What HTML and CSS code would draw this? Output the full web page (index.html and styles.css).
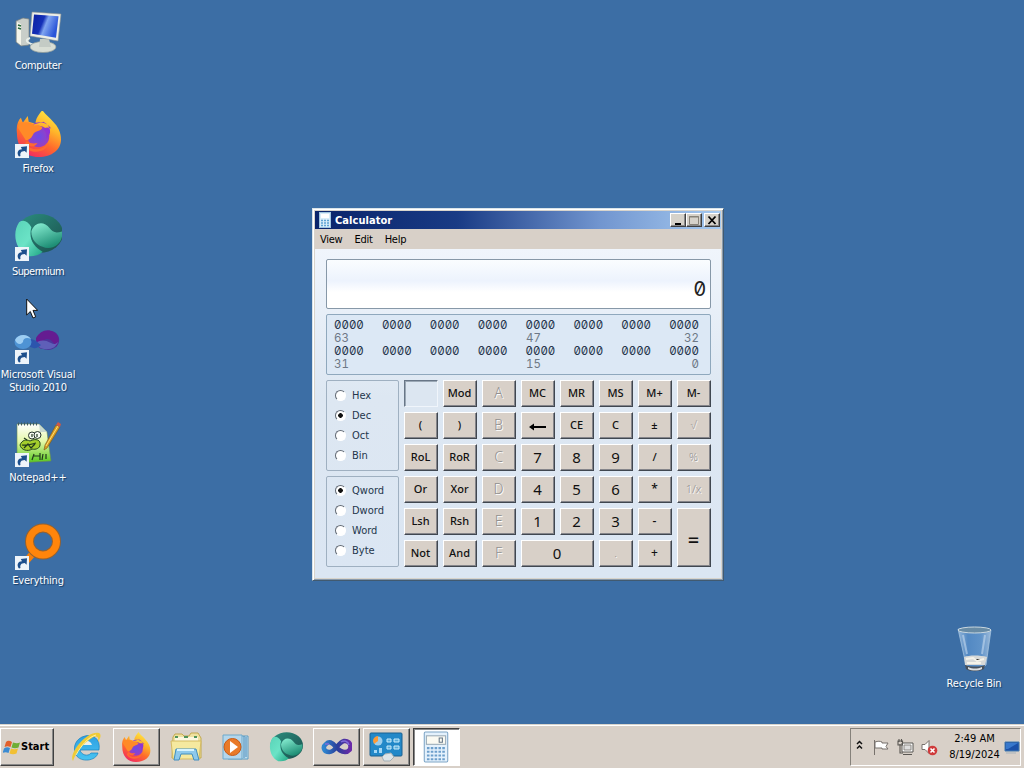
FILE: index.html
```html
<!DOCTYPE html>
<html lang="en">
<head>
<meta charset="utf-8">
<title>Desktop</title>
<link rel="stylesheet" href="styles.css">
</head>
<body>
<svg class="defs" width="0" height="0" aria-hidden="true">
  <defs>
    <linearGradient id="screen" x1="0" y1="0" x2="1" y2=".35"><stop offset="0" stop-color="#0a1fa0"/><stop offset=".45" stop-color="#1430b8"/><stop offset=".6" stop-color="#7fa4f0"/><stop offset="1" stop-color="#2a55d8"/></linearGradient>
    <linearGradient id="fox" x1=".8" y1="0" x2=".3" y2="1"><stop offset="0" stop-color="#fff04a"/><stop offset=".35" stop-color="#ffb52a"/><stop offset=".65" stop-color="#ff6a2c"/><stop offset="1" stop-color="#f02a62"/></linearGradient>
    <radialGradient id="foxcore"><stop offset="0" stop-color="#6a4be8"/><stop offset="1" stop-color="#9a3fc0"/></radialGradient>
    <linearGradient id="sm" x1="0" y1="0" x2="1" y2="1"><stop offset="0" stop-color="#2b8f80"/><stop offset="1" stop-color="#1b4f4c"/></linearGradient>
    <linearGradient id="sm2" x1="0" y1="0" x2="1" y2="1"><stop offset="0" stop-color="#59d3b8"/><stop offset=".5" stop-color="#6be3c6"/><stop offset="1" stop-color="#1fa583"/></linearGradient>
    <linearGradient id="sm3" x1="0" y1="0" x2=".5" y2="1"><stop offset="0" stop-color="#8df3d7"/><stop offset="1" stop-color="#1f8f76"/></linearGradient>
    <linearGradient id="vs" x1="0" x2="1"><stop offset="0" stop-color="#2f86d0"/><stop offset=".5" stop-color="#2a3f9a"/><stop offset="1" stop-color="#6a2aa8"/></linearGradient>
    <linearGradient id="npp" x1="0" y1="0" x2="0" y2="1"><stop offset="0" stop-color="#fff"/><stop offset=".45" stop-color="#e4f8a8"/><stop offset="1" stop-color="#55c81c"/></linearGradient>
    <linearGradient id="glass" x1="0" x2="1"><stop offset="0" stop-color="#b7d3ee"/><stop offset=".3" stop-color="#5c94d0"/><stop offset=".7" stop-color="#6ea2d8"/><stop offset="1" stop-color="#c4daf0"/></linearGradient>
    <linearGradient id="ie" x1="0" y1="0" x2="0" y2="1"><stop offset="0" stop-color="#2d9fe2"/><stop offset="1" stop-color="#48c4f2"/></linearGradient>
    <symbol id="firefox" viewBox="0 0 48 48">
      <path d="M2 24C1 16 3 11 6 8l2 5 5-7 1 6 7 2C21 8 25 4 28 0c2 4 7 7 11 12 5 5 8 11 8 18 0 10-9 18-23 18C11 48 2 39 2 24z" fill="url(#fox)"/>
      <circle cx="24" cy="27" r="11" fill="url(#foxcore)"/>
      <path d="M18 15c6-5 15-2 19 4-4-2-7-1-8 1 3 2 4 6 3 9 6-4 5-13-3-17z" fill="#8f34d4"/>
      <path d="M3 18c1-4 4-7 6-5 4-1 8 0 11 3 3-1 6 0 8 2-2 4-7 3-9 6-2 4-3 6-8 7z" fill="#ff8a28"/>
      <path d="M12 32c4 3 8 2 11 2-3 4-7 4-11 1 4 7 16 7 22-1-1 9-18 13-25 2z" fill="#ff6a32"/>
    </symbol>
    <symbol id="supermium" viewBox="0 0 48 44">
      <ellipse cx="25" cy="20" rx="23" ry="19" fill="url(#sm)"/>
      <path d="M5 9C-2 19 1 36 13 42c7 1 12-1 15-4C19 33 14 25 17 14 14 8 9 6 5 9z" fill="url(#sm2)"/>
      <path d="M17 18c3-9 12-11 18-3 3 4 6 5 12 3 2 13-11 19-19 15-6-2-11-7-11-15z" fill="url(#sm3)"/>
    </symbol>
    <symbol id="shortcut" viewBox="0 0 14 14">
      <rect width="14" height="14" fill="#eef4fa"/>
      <path d="M4 12.500C1 8.500 3.500 5 7 5.200L5.800 3 12 2.300l-.4 6.400-1.900-1.800C6 7 4.800 9 5.500 12z" fill="#1d4f8c"/>
    </symbol>
    <symbol id="calc" viewBox="0 0 24 30">
      <rect x="1" y="1" width="22" height="28" rx="1" fill="#e4f1fc" stroke="#7fa6c6"/>
      <rect x="3" y="4.500" width="18" height="8" fill="#fbfaf2" stroke="#9bacb8"/>
      <path d="M15 6.500h3v4h-3z" fill="none" stroke="#667788"/>
      <path d="M3.500 16h17M3.500 19.500h17M3.500 23h17M3.500 26.500h17" stroke="#6d9fcb" stroke-width="2" stroke-dasharray="2.400 1.200"/>
    </symbol>
    <symbol id="calc-small" viewBox="0 0 12 16">
      <rect x=".5" y=".5" width="11" height="15" fill="#d9edf9" stroke="#9fc4df"/>
      <path d="M2 2h8v4H2z" fill="#fff"/>
      <path d="M2 8.500h8M2 11h8M2 13.500h8" stroke="#5ea3d3" stroke-width="1.300" stroke-dasharray="2 1"/>
    </symbol>
  </defs>
</svg>

<main class="desktop">
  <div class="shortcut computer">
    <svg class="icon" viewBox="0 0 48 48">
      <path d="M2 13l7-3 6 1v26l-8 1-5-4z" fill="#c9cec9" stroke="#777f80" stroke-width=".7"/><path d="M3 14l4 2v21l-4-3z" fill="#f4f4ea"/><path d="M4 17l3 1M4 20l3 1" stroke="#27683b" stroke-width="1.500"/><path d="M16 30c-6 2-3 5 4 7" stroke="#e9efea" stroke-width="2" fill="none"/>
      <ellipse cx="29" cy="39" rx="13" ry="5.500" fill="#d9ded5" stroke="#8e9a96" stroke-width=".7"/><path d="M26 31h9l2 8H25z" fill="#c4cbc5"/>
      <path d="M18 4l29 2-3 27-28-5z" fill="#eceee7" stroke="#8b9292" stroke-width=".6"/><path d="M20 6.500l24.500 1.800-2.500 21.500-24-4z" fill="url(#screen)"/>
    </svg>
    <span class="name">Computer</span>
  </div>
  <div class="shortcut firefox">
    <svg class="icon" viewBox="0 0 48 48"><use href="#firefox" x="1" y="-1" width="47" height="47"/><use href="#shortcut" x="1" y="33" width="14" height="14"/></svg>
    <span class="name">Firefox</span>
  </div>
  <div class="shortcut supermium">
    <svg class="icon" viewBox="0 0 48 48"><use href="#supermium" y="-1" width="49" height="45"/><use href="#shortcut" x="1" y="33" width="14" height="14"/></svg>
    <span class="name">Supermium</span>
  </div>
  <div class="shortcut studio">
    <svg class="icon" viewBox="0 0 48 48">
      <g transform="translate(0 1)">
      <path d="M22 27c6 5 14 7 20 2 6-6 3-15-5-16-7 0-11 4-15 10" fill="#4b369b"/><path d="M22 20c4-7 11-10 18-6 6 4 6 10 2 15-3-6-7-10-12-7-4 2-5 6-2 9-5-2-6-6-6-11z" fill="#651c91"/><path d="M20 26c5-4 10-5 17-1 3 2 5 1 7-1-2 7-13 11-24 2z" fill="#5f5fb8"/>
      <path d="M17 21c5 1 6 3 10 6-4 4-8 4-12 1" fill="#2c55ad"/><ellipse cx="9" cy="24" rx="8.500" ry="7" fill="#4e93d4"/><path d="M1 22c3-6 12-7 16-1-4-2-8-1-8 3-2 3-6 3-8-2z" fill="#9dcdf2"/>
      </g>
      <use href="#shortcut" x="1" y="33" width="14" height="14"/>
    </svg>
    <span class="name">Microsoft Visual<br>Studio 2010</span>
  </div>
  <div class="shortcut notepad">
    <svg class="icon" viewBox="0 0 48 48">
      <path d="M3 4h22l8 8 4 29-34 2z" fill="url(#npp)" stroke="#6a8b50" stroke-width=".6"/><path d="M25 4l8 8h-7z" fill="#c8d9d0"/><path d="M4 4h21" stroke="#405b61" stroke-width="3" stroke-dasharray="1 2"/>
      <path d="M6 25c2-5 6-6 10-4 6-3 11-1 10 4 0 3-4 5-8 4-4 3-11 1-12-4z" fill="#a5ce2c" stroke="#24451d"/><circle cx="18" cy="15.500" r="3.500" fill="#f6faf0" stroke="#26342b"/><circle cx="23.500" cy="15" r="3.500" fill="#f6faf0" stroke="#26342b"/><path d="M18 14v3M23 14v3M8 25c6 1 10-1 14-2M10 28l4-4 3 4 4-4M13 20l-3-2M20 34l-2 6M20 36h6M26 33v7M29 34l-1 6M32 34v5" fill="none" stroke="#21381d" stroke-width="1.200"/>
      <path d="M42 5l4 2-13 21-3 2 1-5z" fill="#d99c24" stroke="#75571a" stroke-width=".6"/><path d="M44 6L32 26" stroke="#ffe070" stroke-width="1"/><path d="M42 5l2-3 3 2-1 3z" fill="#ce5946"/>
      <use href="#shortcut" x="1" y="33" width="14" height="14"/>
    </svg>
    <span class="name">Notepad++</span>
  </div>
  <div class="shortcut everything">
    <svg class="icon" viewBox="0 0 48 48"><path d="M17 27l5 5-7 8-5-4z" fill="#f57f0b"/><circle cx="29" cy="18.500" r="13.500" fill="none" stroke="#96622f" stroke-width="9"/><circle cx="29" cy="18.500" r="13.500" fill="none" stroke="#ff850b" stroke-width="7"/><use href="#shortcut" x="1" y="33" width="14" height="14"/></svg>
    <span class="name">Everything</span>
  </div>
  <div class="shortcut recycle">
    <svg class="icon" viewBox="0 0 48 48"><path d="M8 3l33 1-5 35c-4 4-15 4-20 0z" fill="url(#glass)" fill-opacity=".7" stroke="#a9c7e3" stroke-width=".7"/><ellipse cx="24.500" cy="4" rx="16.500" ry="3" fill="#688ba5" stroke="#cbd8df"/><path d="M14 31c5-2 16-2 23 0l-2 8H15z" fill="#d7d9d8"/><path d="M15 39c6 2 15 2 20 0l-1 4c-5 3-14 3-18 0z" fill="#46505c"/><path d="M18 41c5 2 9 2 14 0v2c-4 2-10 2-14 0z" fill="#d8dce0"/><path d="M16 33l7-1 4 3 7-2M17 37h14" stroke="#f5f3ea" stroke-width="2"/><path d="M13 9l4 19M35 9l-3 19" stroke="#d5e5f5" stroke-width="2" opacity=".5"/></svg>
    <span class="name">Recycle Bin</span>
  </div>

  <section class="window">
    <header class="titlebar">
      <svg class="title-icon"><use href="#calc-small"/></svg>
      <h1>Calculator</h1>
      <div class="controls">
        <button aria-label="Minimize"><svg viewBox="0 0 12 11"><path d="M3 8h6v2H3z"/></svg></button><button aria-label="Maximize"><svg viewBox="0 0 12 11"><path d="M1.500 1.500h9v8h-9z" fill="none" stroke="#888379"/><path d="M1 2h10" stroke="#888379"/></svg></button><button class="close" aria-label="Close"><svg viewBox="0 0 12 11"><path d="M2.500 1.500l7 7.500M9.500 1.500l-7 7.500" stroke="#000" stroke-width="1.800"/></svg></button>
      </div>
    </header>
    <nav class="menu"><span>View</span><span>Edit</span><span>Help</span></nav>
    <div class="client">
      <output class="display">0</output>
      <div class="bits">
        <div class="bit-row"><span>0000</span><span>0000</span><span>0000</span><span>0000</span><span>0000</span><span>0000</span><span>0000</span><span>0000</span></div>
        <div class="bit-index"><span>63</span><span class="middle">47</span><span class="last">32</span></div>
        <div class="bit-row"><span>0000</span><span>0000</span><span>0000</span><span>0000</span><span>0000</span><span>0000</span><span>0000</span><span>0000</span></div>
        <div class="bit-index"><span>31</span><span class="middle">15</span><span class="last">0</span></div>
      </div>
      <div class="controls-area">
        <div class="modes">
          <div class="group"><label><i class="radio"></i>Hex</label><label><i class="radio on"></i>Dec</label><label><i class="radio"></i>Oct</label><label><i class="radio"></i>Bin</label></div>
          <div class="group sizes"><label><i class="radio on"></i>Qword</label><label><i class="radio"></i>Dword</label><label><i class="radio"></i>Word</label><label><i class="radio"></i>Byte</label></div>
        </div>
        <div class="keys">
          <span class="blank"></span><button>Mod</button><button class="off letter">A</button><button>MC</button><button>MR</button><button>MS</button><button>M+</button><button>M-</button>
          <button>(</button><button>)</button><button class="off letter">B</button><button aria-label="Backspace"><svg class="back" viewBox="0 0 18 8"><path d="M0 4l5-3.500V3h12v2H5v2.500z"/></svg></button><button>CE</button><button>C</button><button>±</button><button class="off">√</button>
          <button>RoL</button><button>RoR</button><button class="off letter">C</button><button class="num">7</button><button class="num">8</button><button class="num">9</button><button>/</button><button class="off">%</button>
          <button>Or</button><button>Xor</button><button class="off letter">D</button><button class="num">4</button><button class="num">5</button><button class="num">6</button><button class="op">*</button><button class="off">1/x</button>
          <button>Lsh</button><button>Rsh</button><button class="off letter">E</button><button class="num">1</button><button class="num">2</button><button class="num">3</button><button class="op">-</button><button class="equals">=</button>
          <button>Not</button><button>And</button><button class="off letter">F</button><button class="num zero">0</button><button class="off">.</button><button class="op">+</button>
        </div>
      </div>
    </div>
  </section>
  <svg class="pointer" viewBox="0 0 12 21"><path d="M.7 1v16l3.600-3.500 2.700 6.500 2.700-1.200L7 12.400h4.700z" fill="#fff" stroke="#111"/></svg>
</main>

<footer class="taskbar">
  <button class="start"><svg viewBox="0 0 18 16"><path d="M3 3c2-2 4-1 6 0L7.500 8C5 7 4 7 1.500 8z" fill="#e2602c"/><path d="M10 3.500c3 1 5 1 7 0l-1.500 5c-2 1-5 1-7 0z" fill="#6fae35"/><path d="M1 9.500C3 8 5 8 7 9l-1.500 5c-2-1-4-1-6 0z" fill="#3b8bd2"/><path d="M8 9.500c2 1 5 1 7 0l-1.500 5c-2 1-5 1-7 0z" fill="#f2c033"/></svg>Start</button>
  <div class="task"><svg viewBox="0 0 32 32"><path d="M10 19h19C31 7 22 3 15 5 6 7 2 16 6 24c5 8 20 6 22-2h-7c-3 4-10 2-11-3z" fill="url(#ie)" stroke="#1680bd" stroke-width=".7"/><path d="M11 14c1-5 9-6 11 0z" fill="#e8eeec"/><path d="M3 30C-2 23 17-1 29 2c3 2 1 6-1 9 1-5-1-7-6-4C13 12 5 23 3 30z" fill="#f0cb36"/><path d="M6 24C11 15 18 6 26 4" stroke="#fff3a0" fill="none"/></svg></div>
  <div class="task raised"><svg class="fox-icon"><use href="#firefox"/></svg></div>
  <div class="task"><svg viewBox="0 0 32 32"><path d="M3 6l2-3h7l2 2h5l2-3h7l3 5v20H2z" fill="#eee1a0" stroke="#c2a94f"/><path d="M5 6h23v5H5z" fill="#faf7df"/><path d="M5 6h3M14 6h4M24 6h3" stroke="#4e935b" stroke-width="2"/><path d="M1 10h30l-2 18H3z" fill="#f5e99f" stroke="#d5bb63"/><path d="M4 29l2-11h20l3 11h-5l-2-6H11l-2 6z" fill="#8dc9eb" stroke="#428ebd"/><path d="M7 19h17" stroke="#d6f4ff" stroke-width="2"/></svg></div>
  <div class="task"><svg viewBox="0 0 32 32"><path d="M7 5h21v23H8z" fill="#c0dded" stroke="#5c9cc2"/><path d="M24 5v22M26 6v20" stroke="#468abb"/><path d="M3 4h19v24H3z" fill="#b4d6eb" stroke="#6da9cc"/><circle cx="12.500" cy="16" r="8.500" fill="#e97a28" stroke="#c85a16"/><path d="M10 10v12l8-6z" fill="#fff"/></svg></div>
  <div class="task"><svg class="super-icon"><use href="#supermium"/></svg></div>
  <div class="task raised"><svg viewBox="0 0 32 32"><path d="M16 16c-4-5-7-6-10-3-4 3-2 8 3 8 6 1 9-10 15-11 8-1 9 11 1 11-4 0-6-2-9-5" fill="none" stroke="url(#vs)" stroke-width="4.500"/><path d="M5 13l4 0M21 11c3-2 7-1 8 3" fill="none" stroke="#7e6cda" stroke-width="1.500"/></svg></div>
  <div class="task raised"><svg class="panel-icon" viewBox="0 0 34 30"><rect x="1" y="1" width="32" height="23" rx="1" fill="#2388c8" stroke="#1b6091"/><circle cx="9" cy="9" r="4.500" fill="#9bcdec"/><path d="M9 9V4a5 5 0 0 0-4 8z" fill="#ff9a35"/><path d="M18 7h4v3h-4zM25 7h5v3h-5zM18 14h4v3h-4zM25 14h5v3h-5z" fill="#5aadd9" stroke="#c9ebfc"/><path d="M5 18h3v3H5zM10 16h3v5h-3z" fill="#a4d7f5"/><path d="M13 25l3-3 6-1 3 4-4 4h-6z" fill="#dce4e8" stroke="#a5afb4"/></svg></div>
  <div class="task active"><svg><use href="#calc"/></svg></div>
  <div class="tray">
    <svg class="chevrons" viewBox="0 0 7 10"><path d="M1 4l2.500-2.500L6 4M1 8.500L3.500 6 6 8.500" fill="none" stroke="#111" stroke-width="1.500"/></svg>
    <svg class="flag" viewBox="0 0 17 17"><path d="M1.500 1v15M2 3c3-1 5-1 7 0v1h6l-2 3.500L15 10H9V9H2z" fill="#fff" stroke="#77716c"/></svg>
    <svg class="network" viewBox="0 0 17 17"><path d="M5 4h11v9H5z" fill="#fff" stroke="#595652"/><path d="M7 6h7v5H7z" fill="#ddd" stroke="#8d8984"/><path d="M6 15.500h9M3 5v9h3M1 2h4.500v4H1zM2 0v3M4.500 0v3" fill="none" stroke="#595652" stroke-width="1.100"/></svg>
    <svg class="volume" viewBox="0 0 17 17"><path d="M1 5.500h3l4-4v13l-4-4H1z" fill="#fff" stroke="#77716c"/><circle cx="11.500" cy="11.500" r="4.800" fill="#cf3b3b"/><path d="M9.500 9.500l4 4M13.500 9.500l-4 4" stroke="#fff" stroke-width="1.600"/></svg>
    <time><span>2:49 AM</span><span>8/19/2024</span></time>
    <svg class="show" viewBox="0 0 16 14"><path d="M1 2h14v9H1z" fill="#1b50a8" stroke="#437bae"/><path d="M2 3h12L4 9H2z" fill="#3878cc"/><path d="M2 13h10" stroke="#a7b3bc"/></svg>
  </div>
</footer>
</body>
</html>
```

FILE: styles.css
```css
* { box-sizing: border-box; }
html, body { width: 1024px; height: 768px; margin: 0; overflow: hidden; }
body { display: flex; flex-direction: column; background: #3c6ea5; color: #000; font: 11px/13px "DejaVu Sans Condensed", "DejaVu Sans", sans-serif; font-stretch: condensed; }
button { margin: 0; padding: 0; color: inherit; font: inherit; }
svg { display: block; flex: none; }
.defs { position: absolute; }

.desktop { position: relative; height: 724px; flex: none; }
.shortcut { position: absolute; left: -11px; width: 98px; display: flex; flex-direction: column; align-items: center; color: #fff; text-align: center; text-shadow: 1px 1px 1px #183d65; }
.icon { width: 48px; height: 48px; margin-bottom: 3px; }
.name { letter-spacing: -.2px; white-space: nowrap; }
.computer { top: 8px; }
.computer .name { letter-spacing: -.35px; }
.firefox { top: 111px; }
.supermium { top: 214px; }
.supermium .name { letter-spacing: -.55px; }
.studio { top: 317px; }
.notepad { top: 420px; }
.notepad .name { letter-spacing: -.15px; }
.everything { top: 523px; }
.recycle { left: 925px; top: 626px; }
.pointer { position: absolute; left: 26px; top: 298px; width: 12px; height: 21px; }

.window { position: absolute; left: 312px; top: 208px; width: 412px; height: 373px; padding: 2px; background: #d8d4cc; border: 1px solid; border-color: #d9e3e8 #415a70 #415a70 #d9e3e8; box-shadow: inset 1px 1px #fff, inset -1px -1px #899aac; }
.titlebar { height: 18px; display: flex; align-items: center; padding: 0 1px 0 4px; background: linear-gradient(90deg, #0a246a, #193b85 35%, #7195cf 70%, #a6caf0); color: #fff; }
.title-icon { width: 12px; height: 16px; margin-right: 4px; }
.titlebar h1 { margin: 0; flex: 1; padding-top: 1px; font-size: 11px; line-height: 14px; letter-spacing: .05px; }
.controls { display: flex; }
.controls button { width: 16px; height: 14px; padding: 0; background: #d6d2ca; border: 1px solid; border-color: #fff #404040 #404040 #fff; box-shadow: inset -1px -1px #888; }
.controls svg { width: 12px; height: 11px; margin: 0 1px; }
.controls .close { margin-left: 2px; }
.menu { height: 20px; display: flex; align-items: center; gap: 12px; padding: 0 5px; background: #d8d0c8; letter-spacing: -.25px; }
.client { height: 329px; padding: 10px 10px 11px 11px; background: linear-gradient(#f0f5fc, #dde7f2 45%, #dbe6f3); display: flex; flex-direction: column; }
.display { display: block; height: 50px; padding: 17px 4px 0 0; border: 1px solid #8798a8; border-radius: 2px; background: linear-gradient(#fafdff, #edf3fd 43%, #fff 67%); font: 20px/24px Inter, sans-serif; font-feature-settings: "zero"; text-align: right; color: #222; }
.bits { height: 61px; margin-top: 5px; padding: 3px 11px 2px 7px; border: 1px solid #8fa8bd; border-radius: 2px; background: #dce8f5; color: #25344b; font: 11.500px/14px Inter, sans-serif; font-feature-settings: "zero", "tnum"; }
.bit-row { display: flex; justify-content: space-between; height: 14px; }
.bit-index { display: grid; grid-template-columns: 192px 1fr 1fr; height: 12px; line-height: 12px; color: #6e7886; }
.last { text-align: right; }
.controls-area { display: flex; margin-top: 5px; gap: 5px; }
.modes { width: 73px; display: flex; flex-direction: column; gap: 5px; }
.group { height: 91px; padding: 4px 0 0 8px; border: 1px solid #9fb0c1; border-radius: 2px; color: #24364c; font-size: 11px; }
.group.sizes { padding-top: 3px; }
.group label { display: flex; align-items: center; height: 20px; gap: 6px; }
.radio { width: 11px; height: 11px; border: 1px solid; border-color: #626a74 #fff #fff #626a74; border-radius: 50%; background: #fff; }
.radio.on { background: radial-gradient(circle, #111 0 2px, #fff 2.600px); }
.keys { display: grid; grid-template-columns: repeat(8, 34px); grid-template-rows: repeat(6, 27px); gap: 5px; }
.keys button, .blank { background: #d8d0c8; border: 1px solid; border-color: #fff #404750 #404750 #fff; box-shadow: inset -1px -1px #85858a; }
.keys button { display: flex; align-items: center; justify-content: center; padding: 0 1px 2px 0; font: 500 11px/18px "Noto Sans", "Open Sans", sans-serif; color: #111; }
.keys .blank { background: #dce6f1; border-color: #687687 #f0f5fb #f0f5fb #687687; box-shadow: inset 1px 1px #9ba8b5; }
.keys .off { color: #929090; text-shadow: 1px 1px #fff; font-weight: 300; }
.keys .letter { font-size: 14px; }
.keys .num { font-size: 15px; font-weight: 400; }
.keys .op { font-size: 12px; }
.keys .zero { grid-column: 4 / span 2; }
.keys .equals { grid-column: 8; grid-row: 5 / span 2; font-size: 20px; padding-top: 7px; }
.back { width: 18px; height: 8px; margin-top: 4px; }

.taskbar { height: 44px; flex: none; display: flex; align-items: flex-start; gap: 3px; padding: 3px 3px 3px 0; border-top: 1px solid #d8d4cc; background: #d8d0c8; box-shadow: inset 0 1px #fff; }
.start { width: 54px; height: 38px; margin-right: 6px; display: flex; align-items: center; gap: 0; padding: 0 0 1px 2px; font-weight: 700; background: #d8d0c8; border: 1px solid; border-color: #fff #404040 #404040 #fff; box-shadow: inset -1px -1px #888; }
.start svg { width: 18px; height: 16px; }
.task { width: 47px; height: 38px; padding-right: 1px; display: flex; align-items: center; justify-content: center; border: 1px solid transparent; }
.task svg { width: 32px; height: 32px; }
.task .fox-icon { width: 30px; height: 30px; }
.task .super-icon { width: 34px; height: 32px; }
.task .panel-icon { width: 34px; height: 30px; }
.raised { border-color: #fff #404040 #404040 #fff; box-shadow: inset -1px -1px #888; }
.active { background: #fff; border-color: #404040 #fff #fff #404040; box-shadow: inset 1px 1px #888; }
.tray { width: 171px; height: 38px; margin-left: auto; padding-left: 5px; display: flex; align-items: center; border: 1px solid; border-color: #85817b #fff #fff #85817b; }
.chevrons { width: 7px; height: 10px; margin: 0 10px 4px 0; }
.flag, .network, .volume { width: 17px; height: 17px; margin-right: 7px; }
.tray time { width: 53px; margin-left: 3px; display: flex; flex-direction: column; align-items: center; line-height: 16px; white-space: nowrap; }
.show { width: 16px; height: 14px; margin-left: 3px; }
```
